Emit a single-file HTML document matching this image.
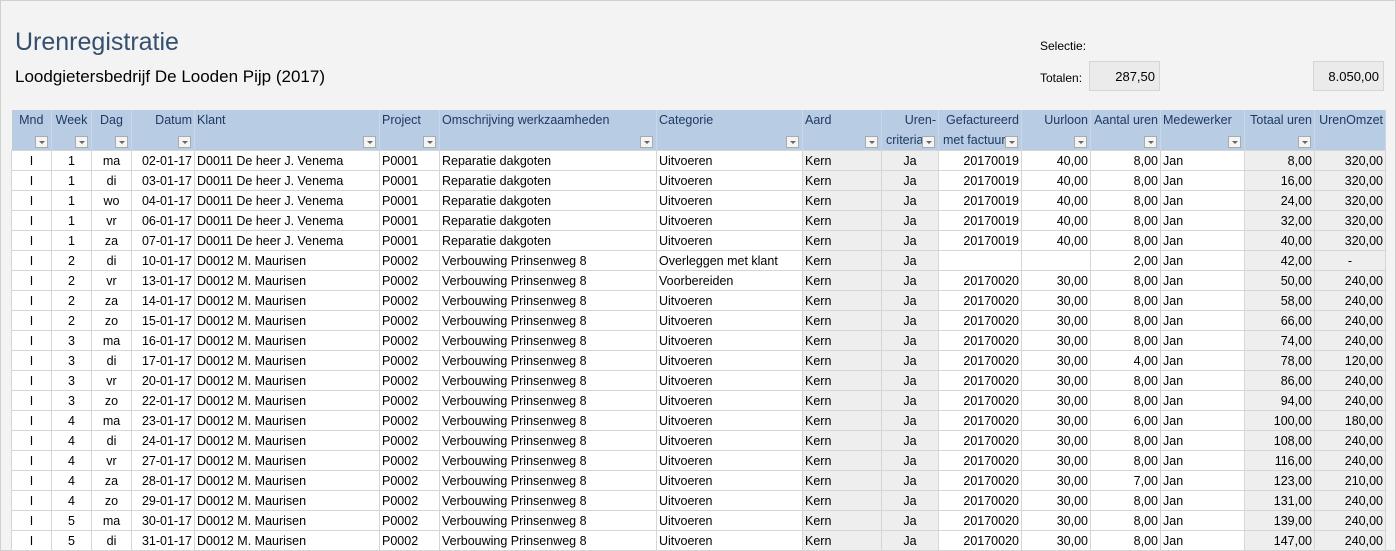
<!DOCTYPE html>
<html><head><style>
body{margin:0;width:1396px;height:551px;background:#f3f3f3;font-family:"Liberation Sans",sans-serif;overflow:hidden;position:relative;border:1px solid #d0d0d0;box-sizing:border-box}
.t{position:absolute;left:14px;top:27px;font-size:25px;color:#34506e}
.s{position:absolute;left:14px;top:66px;font-size:17px;color:#000}
.l{position:absolute;font-size:12px;color:#000}
.box{position:absolute;top:60px;height:30px;background:#ebebeb;border:1px solid #d5d5d5;box-sizing:border-box;font-size:13px;text-align:right;padding-right:4px;line-height:30px}
table{position:absolute;left:10px;top:109px;border-collapse:collapse;table-layout:fixed;font-size:12.5px}
td{height:20px;border:1px solid #d6d6d6;padding:0 2px;white-space:nowrap;overflow:hidden;background:#fff;box-sizing:border-box}
th{height:37px;background:#b8cce4;font-weight:normal;color:#1f3a60;vertical-align:top;padding:3px 2px 0;position:relative;border-right:1px solid #c9d7ea;white-space:nowrap;overflow:hidden;font-size:12.5px}
th i{position:absolute;right:3px;bottom:2px;width:13px;height:12px;background:#f4f4f4;border:1px solid #aaa;box-sizing:border-box}
th i:after{content:"";position:absolute;left:3px;top:4px;border:3px solid transparent;border-top:3px solid #666}
.c{text-align:center}.r{text-align:right}.g{background:#eeeeee}
</style></head><body>
<div class="t">Urenregistratie</div>
<div class="s">Loodgietersbedrijf De Looden Pijp (2017)</div>
<div class="l" style="left:1039px;top:38px">Selectie:</div>
<div class="l" style="left:1039px;top:70px">Totalen:</div>
<div class="box" style="left:1088px;width:71px">287,50</div>
<div class="box" style="left:1312px;width:71px">8.050,00</div>
<table>
<colgroup><col style="width:40px"><col style="width:40px"><col style="width:40px"><col style="width:63px"><col style="width:185px"><col style="width:60px"><col style="width:217px"><col style="width:146px"><col style="width:79px"><col style="width:57px"><col style="width:83px"><col style="width:69px"><col style="width:70px"><col style="width:84px"><col style="width:70px"><col style="width:71px"></colgroup>
<tr><th class="c">Mnd<i></i></th><th class="c">Week<i></i></th><th class="c">Dag<i></i></th><th class="r">Datum<i></i></th><th style="text-align:left">Klant<i></i></th><th style="text-align:left">Project<i></i></th><th style="text-align:left">Omschrijving werkzaamheden<i></i></th><th style="text-align:left">Categorie<i></i></th><th style="text-align:left">Aard<i></i></th><th class="r">Uren-<br><span style="position:absolute;left:4px;top:23px">criteria</span><i></i></th><th class="r">Gefactureerd<br><span style="position:absolute;left:4px;top:23px">met factuur</span><i></i></th><th class="r">Uurloon<i></i></th><th class="r">Aantal uren<i></i></th><th style="text-align:left">Medewerker<i></i></th><th class="r">Totaal uren<i></i></th><th class="r">UrenOmzet</th></tr>
<tbody id="b"></tbody>
</table>
<script>
var d=[[1,1,'ma','02-01-17','D0011 De heer J. Venema','P0001','Reparatie dakgoten','Uitvoeren','20170019','40,00','8,00','8,00','320,00'],
[1,1,'di','03-01-17','D0011 De heer J. Venema','P0001','Reparatie dakgoten','Uitvoeren','20170019','40,00','8,00','16,00','320,00'],
[1,1,'wo','04-01-17','D0011 De heer J. Venema','P0001','Reparatie dakgoten','Uitvoeren','20170019','40,00','8,00','24,00','320,00'],
[1,1,'vr','06-01-17','D0011 De heer J. Venema','P0001','Reparatie dakgoten','Uitvoeren','20170019','40,00','8,00','32,00','320,00'],
[1,1,'za','07-01-17','D0011 De heer J. Venema','P0001','Reparatie dakgoten','Uitvoeren','20170019','40,00','8,00','40,00','320,00'],
[1,2,'di','10-01-17','D0012 M. Maurisen','P0002','Verbouwing Prinsenweg 8','Overleggen met klant','','','2,00','42,00','-'],
[1,2,'vr','13-01-17','D0012 M. Maurisen','P0002','Verbouwing Prinsenweg 8','Voorbereiden','20170020','30,00','8,00','50,00','240,00'],
[1,2,'za','14-01-17','D0012 M. Maurisen','P0002','Verbouwing Prinsenweg 8','Uitvoeren','20170020','30,00','8,00','58,00','240,00'],
[1,2,'zo','15-01-17','D0012 M. Maurisen','P0002','Verbouwing Prinsenweg 8','Uitvoeren','20170020','30,00','8,00','66,00','240,00'],
[1,3,'ma','16-01-17','D0012 M. Maurisen','P0002','Verbouwing Prinsenweg 8','Uitvoeren','20170020','30,00','8,00','74,00','240,00'],
[1,3,'di','17-01-17','D0012 M. Maurisen','P0002','Verbouwing Prinsenweg 8','Uitvoeren','20170020','30,00','4,00','78,00','120,00'],
[1,3,'vr','20-01-17','D0012 M. Maurisen','P0002','Verbouwing Prinsenweg 8','Uitvoeren','20170020','30,00','8,00','86,00','240,00'],
[1,3,'zo','22-01-17','D0012 M. Maurisen','P0002','Verbouwing Prinsenweg 8','Uitvoeren','20170020','30,00','8,00','94,00','240,00'],
[1,4,'ma','23-01-17','D0012 M. Maurisen','P0002','Verbouwing Prinsenweg 8','Uitvoeren','20170020','30,00','6,00','100,00','180,00'],
[1,4,'di','24-01-17','D0012 M. Maurisen','P0002','Verbouwing Prinsenweg 8','Uitvoeren','20170020','30,00','8,00','108,00','240,00'],
[1,4,'vr','27-01-17','D0012 M. Maurisen','P0002','Verbouwing Prinsenweg 8','Uitvoeren','20170020','30,00','8,00','116,00','240,00'],
[1,4,'za','28-01-17','D0012 M. Maurisen','P0002','Verbouwing Prinsenweg 8','Uitvoeren','20170020','30,00','7,00','123,00','210,00'],
[1,4,'zo','29-01-17','D0012 M. Maurisen','P0002','Verbouwing Prinsenweg 8','Uitvoeren','20170020','30,00','8,00','131,00','240,00'],
[1,5,'ma','30-01-17','D0012 M. Maurisen','P0002','Verbouwing Prinsenweg 8','Uitvoeren','20170020','30,00','8,00','139,00','240,00'],
[1,5,'di','31-01-17','D0012 M. Maurisen','P0002','Verbouwing Prinsenweg 8','Uitvoeren','20170020','30,00','8,00','147,00','240,00']];
var h='';d.forEach(function(r){h+='<tr><td class="c">I</td><td class="c">'+r[1]+'</td><td class="c">'+r[2]+'</td><td class="r">'+r[3]+'</td><td>'+r[4]+'</td><td>'+r[5]+'</td><td>'+r[6]+'</td><td>'+r[7]+'</td><td class="g">Kern</td><td class="c g">Ja</td><td class="r">'+r[8]+'</td><td class="r">'+r[9]+'</td><td class="r">'+r[10]+'</td><td>Jan</td><td class="r g">'+r[11]+'</td><td class="'+(r[12]=='-'?'c':'r')+' g">'+r[12]+'</td></tr>';});
document.getElementById('b').innerHTML=h;
</script>
</body></html>
